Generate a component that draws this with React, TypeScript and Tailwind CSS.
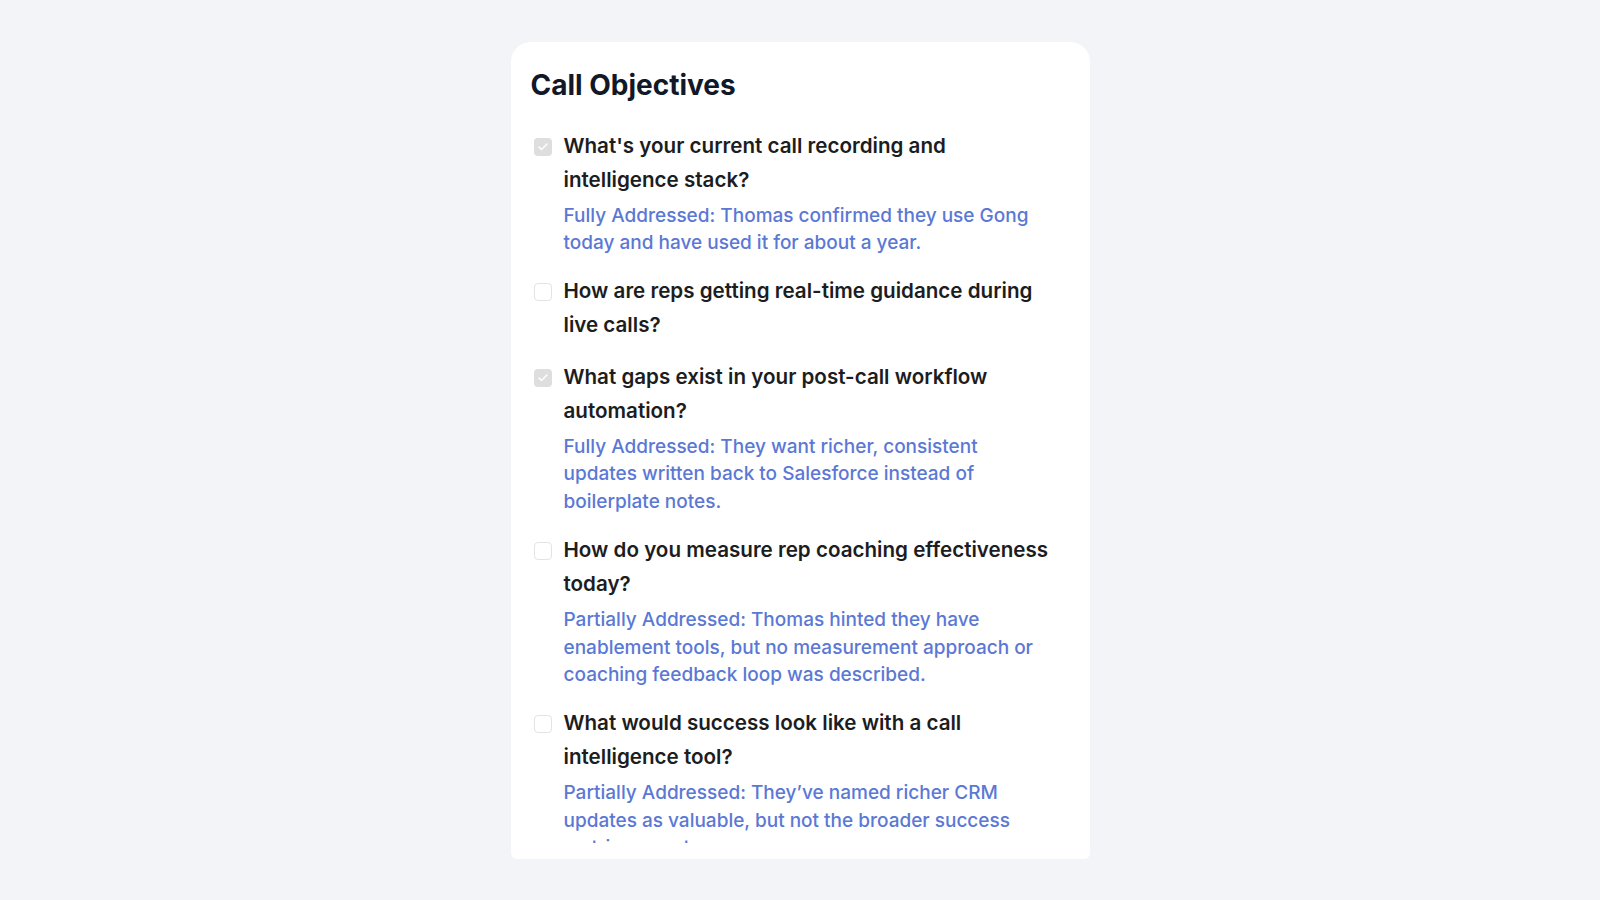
import { Check } from 'lucide-react';

type Objective = {
  question: string;
  done: boolean;
  note?: string;
};

const OBJECTIVES: Objective[] = [
  {
    question: "What's your current call recording and intelligence stack?",
    done: true,
    note: 'Fully Addressed: Thomas confirmed they use Gong today and have used it for about a year.',
  },
  {
    question: 'How are reps getting real-time guidance during live calls?',
    done: false,
  },
  {
    question: 'What gaps exist in your post-call workflow automation?',
    done: true,
    note: 'Fully Addressed: They want richer, consistent updates written back to Salesforce instead of boilerplate notes.',
  },
  {
    question: 'How do you measure rep coaching effectiveness today?',
    done: false,
    note: 'Partially Addressed: Thomas hinted they have enablement tools, but no measurement approach or coaching feedback loop was described.',
  },
  {
    question: 'What would success look like with a call intelligence tool?',
    done: false,
    note: 'Partially Addressed: They\u2019ve named richer CRM updates as valuable, but not the broader success metrics or outcomes.',
  },
];

function Checkbox({ checked }: { checked: boolean }) {
  if (checked) {
    return (
      <div className="mt-[9px] ml-[3px] flex h-[18px] w-[18px] shrink-0 items-center justify-center rounded-[4px] bg-[#dedede]">
        <Check className="h-3 w-3 text-white" strokeWidth={3} />
      </div>
    );
  }
  return (
    <div className="mt-[9px] ml-[3px] h-[18px] w-[18px] shrink-0 rounded-[4px] border border-[#e3e3e3] bg-white" />
  );
}

function ObjectiveRow({ item }: { item: Objective }) {
  return (
    <li className="flex gap-3">
      <Checkbox checked={item.done} />
      <div className="min-w-0 flex-1">
        <p className="text-[20.6px] font-semibold leading-[34px] text-[#1c1d21]">{item.question}</p>
        {item.note && (
          <p className="mt-[5px] text-[19px] font-medium leading-[27.6px] text-[#5b78d5]">
            {item.note}
          </p>
        )}
      </div>
    </li>
  );
}

export default function App() {
  return (
    <div
      className="flex min-h-screen items-center justify-center bg-[#f3f4f8]"
      style={{ fontFamily: 'Inter, "Noto Sans", sans-serif' }}
    >
      <div className="flex h-[817px] w-[579px] flex-col rounded-t-[20px] rounded-b-[6px] bg-white pt-[25px] pr-[38px] pb-4 pl-5">
        <h1 className="text-[28px] font-bold leading-[36px] text-[#111827]">Call Objectives</h1>
        <div className="mt-[26px] min-h-0 flex-1 overflow-hidden">
          <ul className="flex flex-col gap-[17.5px]">
            {OBJECTIVES.map((item) => (
              <ObjectiveRow key={item.question} item={item} />
            ))}
          </ul>
        </div>
      </div>
    </div>
  );
}
